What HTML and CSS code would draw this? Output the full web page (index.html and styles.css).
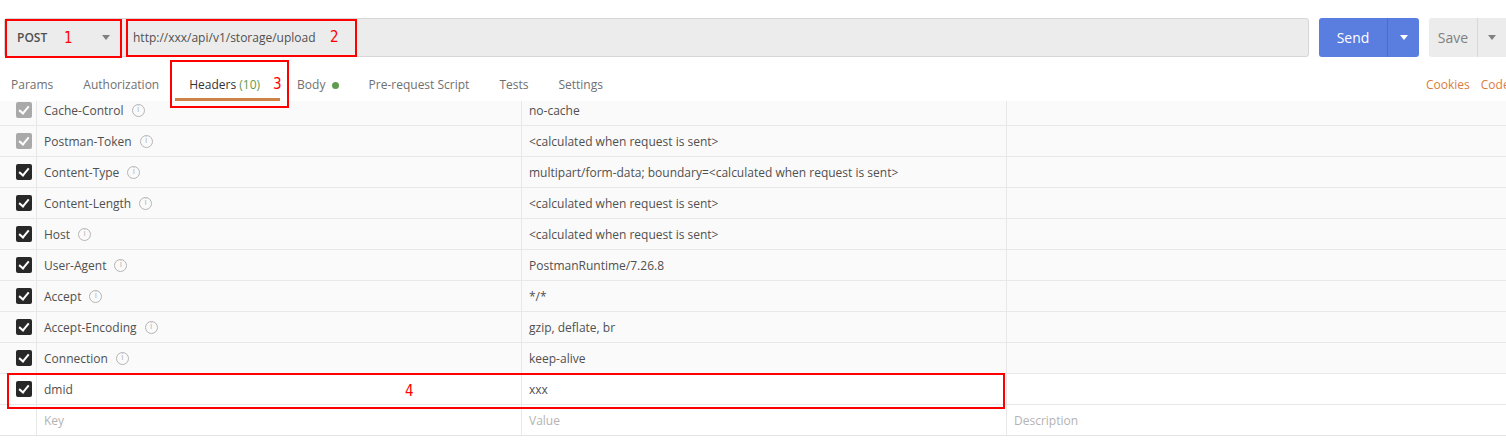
FILE: index.html
```html
<!DOCTYPE html>
<html>
<head>
<meta charset="utf-8">
<link rel="stylesheet" href="styles.css">
</head>
<body>
<div class="page">
  <div class="req-bar">
    <div class="url-group">
      <div class="method">
        <span>POST</span>
        <span class="caret dark"></span>
      </div>
      <div class="url">http://xxx/api/v1/storage/upload</div>
    </div>
    <div class="send">
      <span class="send-label">Send</span>
      <span class="send-drop"><span class="caret light"></span></span>
    </div>
    <div class="save">
      <span class="save-label">Save</span>
      <span class="save-drop"><span class="caret dark"></span></span>
    </div>
  </div>

  <div class="tabs">
    <div class="tab-list">
      <span class="tab">Params</span>
      <span class="tab">Authorization</span>
      <span class="tab active">Headers <span class="count">(10)</span></span>
      <span class="tab">Body <span class="dot"></span></span>
      <span class="tab">Pre-request Script</span>
      <span class="tab">Tests</span>
      <span class="tab">Settings</span>
    </div>
    <div class="tab-links">
      <span class="link">Cookies</span>
      <span class="link">Code</span>
    </div>
  </div>

  <div class="table">
    <div class="row auto first">
      <div class="c-check"><span class="cb disabled"></span></div>
      <div class="c-key">Cache-Control <span class="info">i</span></div>
      <div class="c-val">no-cache</div>
      <div class="c-desc"></div>
    </div>
    <div class="row auto">
      <div class="c-check"><span class="cb disabled"></span></div>
      <div class="c-key">Postman-Token <span class="info">i</span></div>
      <div class="c-val">&lt;calculated when request is sent&gt;</div>
      <div class="c-desc"></div>
    </div>
    <div class="row auto">
      <div class="c-check"><span class="cb"></span></div>
      <div class="c-key">Content-Type <span class="info">i</span></div>
      <div class="c-val">multipart/form-data; boundary=&lt;calculated when request is sent&gt;</div>
      <div class="c-desc"></div>
    </div>
    <div class="row auto">
      <div class="c-check"><span class="cb"></span></div>
      <div class="c-key">Content-Length <span class="info">i</span></div>
      <div class="c-val">&lt;calculated when request is sent&gt;</div>
      <div class="c-desc"></div>
    </div>
    <div class="row auto">
      <div class="c-check"><span class="cb"></span></div>
      <div class="c-key">Host <span class="info">i</span></div>
      <div class="c-val">&lt;calculated when request is sent&gt;</div>
      <div class="c-desc"></div>
    </div>
    <div class="row auto">
      <div class="c-check"><span class="cb"></span></div>
      <div class="c-key">User-Agent <span class="info">i</span></div>
      <div class="c-val">PostmanRuntime/7.26.8</div>
      <div class="c-desc"></div>
    </div>
    <div class="row auto">
      <div class="c-check"><span class="cb"></span></div>
      <div class="c-key">Accept <span class="info">i</span></div>
      <div class="c-val">*/*</div>
      <div class="c-desc"></div>
    </div>
    <div class="row auto">
      <div class="c-check"><span class="cb"></span></div>
      <div class="c-key">Accept-Encoding <span class="info">i</span></div>
      <div class="c-val">gzip, deflate, br</div>
      <div class="c-desc"></div>
    </div>
    <div class="row auto">
      <div class="c-check"><span class="cb"></span></div>
      <div class="c-key">Connection <span class="info">i</span></div>
      <div class="c-val">keep-alive</div>
      <div class="c-desc"></div>
    </div>
    <div class="row">
      <div class="c-check"><span class="cb"></span></div>
      <div class="c-key">dmid</div>
      <div class="c-val">xxx</div>
      <div class="c-desc"></div>
    </div>
    <div class="row placeholder">
      <div class="c-check"></div>
      <div class="c-key">Key</div>
      <div class="c-val">Value</div>
      <div class="c-desc">Description</div>
    </div>
  </div>

  <div class="mark m1"><span class="num">1</span></div>
  <div class="mark m2"><span class="num">2</span></div>
  <div class="mark m3"><span class="num">3</span></div>
  <div class="mark m4"><span class="num">4</span></div>
</div>
</body>
</html>
```

FILE: styles.css
```css
* { box-sizing: border-box; }
html, body { margin: 0; padding: 0; background: #fff; }
body {
  font-family: "Open Sans", "Noto Sans", sans-serif;
  font-size: 12px;
  color: #505050;
  overflow: hidden;
}
.page {
  position: relative;
  width: 1506px;
  height: 444px;
  padding-top: 18px;
  overflow: hidden;
}

/* request bar */
.req-bar {
  display: flex;
  align-items: stretch;
  height: 39px;
  padding-left: 4px;
}
.url-group {
  display: flex;
  width: 1305px;
  flex-shrink: 0;
  background: #ececec;
  border: 1px solid #d6d6d6;
  border-radius: 3px;
}
.method {
  width: 118px;
  display: flex;
  align-items: center;
  justify-content: space-between;
  padding: 0 13px 0 12px;
  font-weight: 600;
  color: #505050;
}
.url {
  display: flex;
  align-items: center;
  padding-left: 10px;
  color: #505050;
  font-size: 12px;
}
.caret {
  display: inline-block;
  width: 0; height: 0;
  border-left: 4px solid transparent;
  border-right: 4px solid transparent;
  border-top: 5px solid #808080;
}
.caret.light { border-top-color: #fff; }

.send {
  margin-left: 10px;
  width: 100px;
  flex-shrink: 0;
  display: flex;
  background: #5a7de0;
  border-radius: 3px;
  color: #fff;
  font-size: 14px;
}
.send-label {
  width: 69px;
  display: flex; align-items: center; justify-content: center;
  border-right: 1px solid #4c6cc9;
}
.send-drop {
  flex: 1;
  display: flex; align-items: center; justify-content: center;
}
.save {
  margin-left: 10px;
  width: 90px;
  display: flex;
  background: #ececec;
  border-radius: 3px;
  color: #808080;
  font-size: 14px;
  flex-shrink: 0;
}
.save-label {
  width: 49px;
  display: flex; align-items: center; justify-content: center;
  border-right: 1px solid #d8d8d8;
}
.save-drop {
  width: 28px;
  display: flex; align-items: center; justify-content: center;
}

/* tabs */
.tabs {
  display: flex;
  height: 44px;
  font-size: 12px;
  padding-top: 10px;
}
.tab-list {
  display: flex;
  align-items: stretch;
  gap: 30px;
  padding-left: 11px;
  color: #707070;
  width: 1426px;
  flex-shrink: 0;
}
.tab { position: relative; line-height: 36px; white-space: nowrap; }
.tab.active { color: #333; margin-right: 7px; }
.tab.active::after {
  content: "";
  position: absolute;
  left: -14px;
  right: -20px;
  bottom: 0;
  height: 3px;
  background: #cf8146;
}
.count { color: #5f9a4e; }
.dot {
  display: inline-block;
  width: 7px; height: 7px;
  border-radius: 50%;
  background: #5f9a4e;
  margin-left: 3px;
  vertical-align: 0;
}
.tab-links {
  display: flex;
  align-items: flex-start;
  gap: 11px;
  flex-shrink: 0;
  white-space: nowrap;
  line-height: 36px;
}
.link { color: #dc7c3e; }

/* table */
.table {
  overflow: hidden;
  border-bottom: 1px solid #e4e4e4;
}
.row {
  display: flex;
  height: 31px;
  border-bottom: 1px solid #e8e8e8;
  background: #fff;
}
.row.auto { background: #fafafa; }
.row.first { margin-top: -6px; }
.row.placeholder { border-bottom: none; height: 30px; color: #b3b3b3; }
.c-check {
  width: 37px;
  flex-shrink: 0;
  border-right: 1px solid #e8e8e8;
  display: flex;
  align-items: center;
  padding-left: 16px;
}
.c-key, .c-val, .c-desc {
  display: flex;
  align-items: center;
  padding-left: 7px;
  white-space: nowrap;
}
.c-key { width: 485px; border-right: 1px solid #e8e8e8; }
.c-val { width: 485px; border-right: 1px solid #e8e8e8; }
.c-desc { flex: 1; }

.cb {
  width: 16px; height: 16px;
  border-radius: 2px;
  background: #282828;
  position: relative;
}
.cb.disabled { background: #a9a9a9; }
.cb::after {
  content: "";
  position: absolute;
  left: 5px; top: 2px;
  width: 4px; height: 8px;
  border-right: 2.5px solid #fff;
  border-bottom: 2.5px solid #fff;
  transform: rotate(40deg);
}
.info {
  display: inline-flex;
  align-items: center;
  justify-content: center;
  width: 13px; height: 13px;
  border: 1px solid #b5b5b5;
  border-radius: 50%;
  color: #b5b5b5;
  font-size: 8px;
  line-height: 1;
  margin-left: 8px;
  font-family: "DejaVu Sans", sans-serif;
}

/* red annotations */
.mark {
  position: absolute;
  border: 2px solid #f00;
}
.num {
  position: absolute;
  color: #f00;
  font-family: "DejaVu Sans Condensed", "DejaVu Sans", sans-serif;
  font-size: 15px;
  line-height: 1;
}
.m1 { left: 5px; top: 19px; width: 117px; height: 39px; }
.m1 .num { left: 57px; top: 10px; }
.m2 { left: 126px; top: 19px; width: 231px; height: 38px; }
.m2 .num { left: 202px; top: 9px; }
.m3 { left: 170px; top: 60px; width: 119px; height: 48px; }
.m3 .num { left: 101px; top: 15px; }
.m4 { left: 7px; top: 373px; width: 998px; height: 36px; }
.m4 .num { left: 396px; top: 9px; }
```
